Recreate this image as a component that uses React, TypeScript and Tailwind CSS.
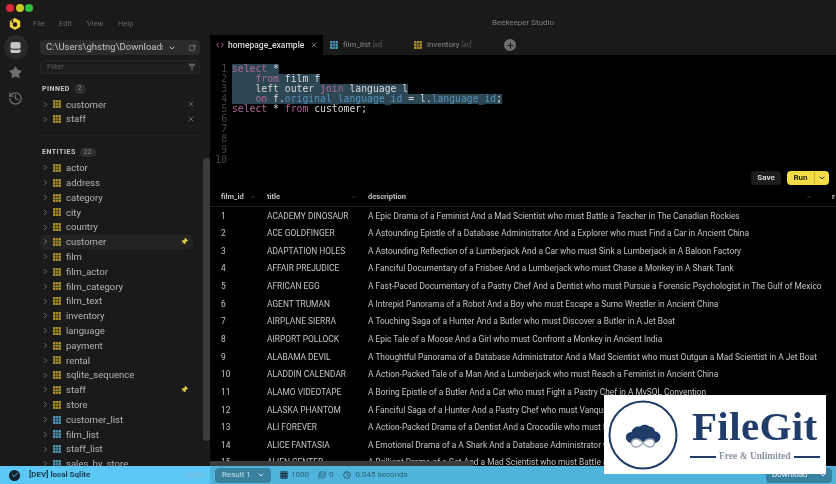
import React from 'react';
import { ChevronRight, Database, Star, History, X, Pin, RotateCw, ChevronDown, ChevronUp, Plus, Check, Code, Filter, Rows3, Clock } from 'lucide-react';

const pinned = ['customer', 'staff'];
const tables = ['actor', 'address', 'category', 'city', 'country', 'customer', 'film', 'film_actor', 'film_category', 'film_text', 'inventory', 'language', 'payment', 'rental', 'sqlite_sequence', 'staff', 'store'];
const views = ['customer_list', 'film_list', 'staff_list', 'sales_by_store'];

const rows: [number, string, string][] = [
  [1, 'ACADEMY DINOSAUR', 'A Epic Drama of a Feminist And a Mad Scientist who must Battle a Teacher in The Canadian Rockies'],
  [2, 'ACE GOLDFINGER', 'A Astounding Epistle of a Database Administrator And a Explorer who must Find a Car in Ancient China'],
  [3, 'ADAPTATION HOLES', 'A Astounding Reflection of a Lumberjack And a Car who must Sink a Lumberjack in A Baloon Factory'],
  [4, 'AFFAIR PREJUDICE', 'A Fanciful Documentary of a Frisbee And a Lumberjack who must Chase a Monkey in A Shark Tank'],
  [5, 'AFRICAN EGG', 'A Fast-Paced Documentary of a Pastry Chef And a Dentist who must Pursue a Forensic Psychologist in The Gulf of Mexico'],
  [6, 'AGENT TRUMAN', 'A Intrepid Panorama of a Robot And a Boy who must Escape a Sumo Wrestler in Ancient China'],
  [7, 'AIRPLANE SIERRA', 'A Touching Saga of a Hunter And a Butler who must Discover a Butler in A Jet Boat'],
  [8, 'AIRPORT POLLOCK', 'A Epic Tale of a Moose And a Girl who must Confront a Monkey in Ancient India'],
  [9, 'ALABAMA DEVIL', 'A Thoughtful Panorama of a Database Administrator And a Mad Scientist who must Outgun a Mad Scientist in A Jet Boat'],
  [10, 'ALADDIN CALENDAR', 'A Action-Packed Tale of a Man And a Lumberjack who must Reach a Feminist in Ancient China'],
  [11, 'ALAMO VIDEOTAPE', 'A Boring Epistle of a Butler And a Cat who must Fight a Pastry Chef in A MySQL Convention'],
  [12, 'ALASKA PHANTOM', 'A Fanciful Saga of a Hunter And a Pastry Chef who must Vanquish a Boy in Australia'],
  [13, 'ALI FOREVER', 'A Action-Packed Drama of a Dentist And a Crocodile who must Battle a Feminist in The Canadian Rockies'],
  [14, 'ALICE FANTASIA', 'A Emotional Drama of a A Shark And a Database Administrator who must Vanquish a Pioneer in Soviet Georgia'],
  [15, 'ALIEN CENTER', 'A Brilliant Drama of a Cat And a Mad Scientist who must Battle a Feminist in A MySQL Convention'],
];

const TableIcon = ({ color }: { color: string }) => (
  <svg width="8" height="8" viewBox="0 0 8 8" className="shrink-0">
    <rect width="8" height="8" rx="1" fill={color} />
    <path d="M0 2.7h8M0 5.3h8M2.7 0v8M5.3 0v8" stroke="#1a1a1a" strokeWidth="0.6" />
  </svg>
);

const EntityRow = ({ name, color, active, pin, close }: { name: string; color: string; active?: boolean; pin?: boolean; close?: boolean }) => (
  <div className={`flex h-[14.8px] items-center rounded-sm pl-[1px] pr-[5px] ${active ? 'bg-[#232323]' : ''}`}>
    <ChevronRight size={9} className="shrink-0 text-[#8a8a8a]" />
    <div className="ml-[3px]"><TableIcon color={color} /></div>
    <span className="ml-[5px] flex-1 text-[9.5px] leading-none text-[#b4b4b4]">{name}</span>
    {pin && <Pin size={7} className="rotate-45 fill-[#f0d84a] text-[#f0d84a]" />}
    {close && <X size={8} className="text-[#8a8a8a]" />}
  </div>
);

const Sidebar = () => (
  <aside className="flex w-[210px] shrink-0 flex-col bg-[#1a1a1a]">
    <div className="flex h-[14px] items-center gap-[1.5px] pl-[6px] pt-[1px]">
      <span className="h-[8px] w-[8px] rounded-full bg-[#e0273a]" />
      <span className="h-[8px] w-[8px] rounded-full bg-[#c8c820]" />
      <span className="h-[8px] w-[8px] rounded-full bg-[#2bc13f]" />
    </div>
    <div className="flex h-[18px] items-center pl-[8px] pt-[2px] text-[7.5px] text-[#666666]">
      <svg width="14" height="14" viewBox="0 0 14 14" className="mr-[11px]">
        <path d="M7 1 12.2 4v6L7 13 1.8 10V4Z" fill="#efd43c" />
        <circle cx="7" cy="7.6" r="2.3" fill="#1a1a1a" />
        <path d="M3.6 2.8h1.6v3H3.6Z" fill="#1a1a1a" />
      </svg>
      <span className="w-[26px]">File</span>
      <span className="w-[28px]">Edit</span>
      <span className="w-[31px]">View</span>
      <span>Help</span>
    </div>
    <div className="flex min-h-0 flex-1">
      <div className="flex w-[31px] shrink-0 flex-col items-center pt-[3px]">
        <div className="flex h-[24px] w-[24px] items-center justify-center rounded-full bg-[#2a2a2a]">
          <Database size={15} className="fill-[#c8c8c8] text-[#2a2a2a]" />
        </div>
        <Star size={13} className="mt-[7px] fill-[#6e6e6e] text-[#6e6e6e]" />
        <History size={15} className="mt-[12px] text-[#6e6e6e]" />
      </div>
      <div className="flex min-w-0 flex-1 flex-col pl-[6px] pt-[8px]">
        <div className="pl-[3px] pr-[10px]">
          <div className="flex h-[15px] items-center rounded-sm bg-[#2b2b2b] pl-[6px] pr-[4px] text-[9.5px] text-[#c4c4c4]">
            <span className="w-[119px] overflow-hidden whitespace-nowrap">C:\Users\ghstng\Downloads</span>
            <ChevronDown size={8} strokeWidth={3} className="ml-[5px] text-[#c4c4c4]" />
            <RotateCw size={8} className="ml-[12px] text-[#a0a0a0]" />
          </div>
          <div className="mt-[5px] flex h-[14px] items-center justify-between rounded-sm border border-[#262626] bg-[#1e1e1e] pl-[6px] pr-[3px] text-[7.5px] text-[#5a5a5a]">
            <span>Filter</span>
            <Filter size={8} className="fill-[#5a5a5a] text-[#5a5a5a]" />
          </div>
        </div>
        <div className="mt-[9px] flex h-[12px] items-center gap-[4px] pl-[5px] text-[7px] font-bold tracking-[0.5px] text-[#c8c8c8]">
          PINNED
          <span className="rounded-full bg-[#2e2e2e] px-[4px] text-[6.5px] font-normal text-[#8a8a8a]">2</span>
        </div>
        <div className="mt-[2px] pl-[3px] pr-[10px]">
          {pinned.map((name) => <EntityRow key={name} name={name} color="#b3942c" close />)}
        </div>
        <div className="mx-[3px] mr-[10px] mt-[8px] border-t border-[#222222]" />
        <div className="flex min-h-0 flex-1 overflow-hidden">
          <div className="min-w-0 flex-1 pl-[3px] pr-[10px]">
            <div className="mt-[11px] flex h-[12px] items-center gap-[4px] pl-[2px] text-[7px] font-bold tracking-[0.5px] text-[#c8c8c8]">
              ENTITIES
              <span className="rounded-full bg-[#2e2e2e] px-[4px] text-[6.5px] font-normal text-[#8a8a8a]">22</span>
            </div>
            <div className="mt-[2px]">
              {tables.map((name) => (
                <EntityRow key={name} name={name} color="#b3942c" active={name === 'customer'} pin={name === 'customer' || name === 'staff'} />
              ))}
              {views.map((name) => <EntityRow key={name} name={name} color="#4f9dc0" />)}
            </div>
          </div>
          <div className="mt-[22px] h-[283px] w-[7px] shrink-0 rounded-sm bg-[#3c3c3c]" />
        </div>
      </div>
    </div>
  </aside>
);

const kw = 'text-[#b5669a]';
const id = 'text-[#4f94b8]';

const Line = ({ children, sel }: { children: React.ReactNode; sel?: boolean }) => (
  <div className={`h-[10.15px] w-fit whitespace-pre ${sel ? 'bg-[#2d4654]' : ''}`}>{children}</div>
);

const Editor = () => (
  <div className="flex h-[111px] shrink-0 bg-black pt-[8.5px] font-['DejaVu_Sans_Mono',monospace] text-[9.75px] leading-[10.15px] text-[#d8d8d8]">
    <div className="w-[17px] text-right text-[#444444]">
      {[1, 2, 3, 4, 5, 6, 7, 8, 9, 10].map((n) => <div key={n} className="h-[10.15px]">{n}</div>)}
    </div>
    <div className="ml-[5px]">
      <Line sel><span className={kw}>select</span> *</Line>
      <Line sel>    <span className={kw}>from</span> film f</Line>
      <Line sel>    left outer <span className={kw}>join</span> language l</Line>
      <Line sel>    <span className={kw}>on</span> f.<span className={id}>original_language_id</span> = l.<span className={id}>language_id</span>;</Line>
      <Line><span className={kw}>select</span> * <span className={kw}>from</span> customer;</Line>
    </div>
  </div>
);

const Tabs = () => (
  <div className="flex h-[20px] shrink-0 items-stretch bg-[#1a1a1a] text-[8px]">
    <div className="flex w-[113px] items-center bg-black pl-[6px] pr-[5px] text-[#d8d8d8]">
      <Code size={8} strokeWidth={3} className="text-[#c0569a]" />
      <span className="ml-[4px] flex-1 text-[8.5px] font-medium">homepage_example</span>
      <X size={8} className="text-[#a0a0a0]" />
    </div>
    <div className="flex w-[84px] items-center pl-[7px] text-[#8a8a8a]">
      <TableIcon color="#4f9dc0" />
      <span className="ml-[5px]">film_list <i className="text-[6.5px] text-[#555555]">[all]</i></span>
    </div>
    <div className="flex w-[90px] items-center pl-[7px] text-[#8a8a8a]">
      <TableIcon color="#b3942c" />
      <span className="ml-[5px]">inventory <i className="text-[6.5px] text-[#555555]">[all]</i></span>
    </div>
    <div className="flex items-center pl-[7px]">
      <span className="flex h-[12px] w-[12px] items-center justify-center rounded-full bg-[#6e6e6e]">
        <Plus size={9} strokeWidth={3} className="text-[#1a1a1a]" />
      </span>
    </div>
  </div>
);

const Results = () => (
  <div className="relative min-h-0 flex-1 overflow-hidden bg-black font-['Roboto',sans-serif]">
    <div className="flex h-[19px] items-center border-b border-[#1c1c1c] text-[7.5px] font-bold text-[#c0c0c0]">
      <span className="flex w-[57px] items-center pl-[11px]">film_id<ChevronUp size={6} className="ml-[6px] text-[#777777]" /></span>
      <span className="flex w-[101px] items-center justify-between pr-[11px]">title<ChevronUp size={6} className="text-[#777777]" /></span>
      <span className="flex w-[456px] items-center justify-between pr-[12px]">description<ChevronUp size={6} className="text-[#777777]" /></span>
      <span className="flex-1 pl-[8px]">r</span>
    </div>
    <div>
      {rows.map(([n, title, desc]) => (
        <div key={n} className="flex h-[17.65px] items-center whitespace-nowrap text-[8.4px] text-[#c4c4c4]">
          <span className="w-[57px] shrink-0 pl-[11px]">{n}</span>
          <span className="w-[101px] shrink-0">{title}</span>
          <span>{desc}</span>
        </div>
      ))}
    </div>
    <div className="absolute bottom-0 left-0 h-[5px] w-[263px] bg-[#3c3c3c]" />
  </div>
);

const StatusBar = () => (
  <footer className="flex h-[18px] shrink-0 items-center font-['Roboto',sans-serif] text-[8px] text-[#1a3a4c]">
    <div className="flex h-full w-[210px] shrink-0 items-center bg-[#5cc8f5] pl-[9px] pr-[5px]">
      <span className="flex h-[11px] w-[11px] items-center justify-center rounded-full bg-[#12222c]">
        <Check size={8} strokeWidth={3} className="text-[#5cc8f5]" />
      </span>
      <span className="ml-[9px] flex-1 font-bold">[DEV] local Sqlite</span>
      <span className="text-[#8cb8cc]">sqlite</span>
    </div>
    <div className="flex h-full flex-1 items-center justify-between bg-[#4fb4dc] pl-[5px] pr-[4px]">
      <div className="flex items-center">
        <span className="flex h-[15px] w-[56px] items-center justify-between rounded-sm bg-[#38829f] pl-[7px] pr-[6px] text-[#c8dfe8]">
          Result 1 <ChevronDown size={8} strokeWidth={3} className="text-[#d8e8f0]" />
        </span>
        <span className="ml-[9px] flex items-center gap-[3px] text-[#2f5f78]"><TableIcon color="#2f6f8f" />1000</span>
        <span className="ml-[9px] flex items-center gap-[3px] text-[#2f5f78]"><Rows3 size={8} className="-skew-x-12" />0</span>
        <span className="ml-[10px] flex items-center gap-[4px] text-[#2f5f78]"><Clock size={8} strokeWidth={3} />0.045 seconds</span>
      </div>
      <span className="flex h-[15px] w-[66px] items-center justify-between rounded-sm bg-[#38829f] pl-[6px] pr-[5px] text-[#e0eef4]">
        Download <ChevronDown size={8} strokeWidth={3} />
      </span>
    </div>
  </footer>
);

const FileGitBadge = () => (
  <div className="absolute left-[604px] top-[395px] flex h-[79px] w-[222px] items-center bg-white pl-[4px]">
    <svg width="70" height="70" viewBox="0 0 70 70" className="shrink-0">
      <circle cx="35" cy="35" r="33.5" fill="none" stroke="#1f3d68" strokeWidth="2" />
      <path d="M23 43c-4-1-5.500-4-5-7 .8-2.500 3-4 5.500-4 .8-4 4.500-6 8.500-5.500 2.500-2.500 7-2.500 9.500 0 3 0 5.500 2.500 5.500 5 3 0 5.500 2.500 5.500 5.500 0 3-2.500 5.500-5.500 6Z" fill="#1f3d68" />
      <path d="M35 43c-2.500-3-4.500-4-7-4-2.500 0-4.500 1.800-4.500 4s2 4 4.500 4c2.500 0 4.500-1 7-4Zm0 0c2.500-3 4.500-4 7-4 2.500 0 4.500 1.800 4.500 4s-2 4-4.500 4c-2.500 0-4.500-1-7-4Z" fill="#ffffff" stroke="#9fa9b8" strokeWidth="1.6" />
    </svg>
    <div className="ml-[12px] flex flex-col items-center">
      <span className="font-['Liberation_Serif',serif] text-[41px] font-bold leading-[42px] tracking-[0.4px] text-[#1f3d68]">FileGit</span>
      <div className="mt-[2px] flex items-center gap-[3px] font-['Liberation_Serif',serif] text-[9.5px] font-bold text-[#8b94a3]">
        <span className="h-[2px] w-[26px] bg-[#1f3d68]" />
        Free &amp; Unlimited
        <span className="h-[2px] w-[26px] bg-[#1f3d68]" />
      </div>
    </div>
  </div>
);

export default function App() {
  return (
    <div className="relative flex h-[484px] w-[836px] flex-col overflow-hidden bg-black font-['Roboto',sans-serif] blur-[0.4px]">
      <div className="flex min-h-0 flex-1">
        <Sidebar />
        <main className="flex min-w-0 flex-1 flex-col">
          <div className="flex h-[35px] shrink-0 items-center justify-center bg-[#1a1a1a] pt-[11px] text-[8px] text-[#7f7f7f]">Beekeeper Studio</div>
          <Tabs />
          <Editor />
          <div className="flex h-[22px] shrink-0 items-center justify-end gap-[6px] bg-black pr-[7px] pt-[1px] font-['Roboto',sans-serif] text-[8px] font-bold">
            <span className="flex h-[14px] w-[30px] items-center justify-center rounded-sm bg-[#1c1c1c] text-[#d8d8d8]">Save</span>
            <span className="flex h-[14px] w-[42px] items-center rounded-sm bg-[#f3dc45] text-[#2a2a10]">
              <span className="w-[28px] border-r border-[#c8b43a] text-center">Run</span>
              <ChevronDown size={8} strokeWidth={3} className="ml-[3px]" />
            </span>
          </div>
          <Results />
        </main>
      </div>
      <StatusBar />
      <FileGitBadge />
    </div>
  );
}
